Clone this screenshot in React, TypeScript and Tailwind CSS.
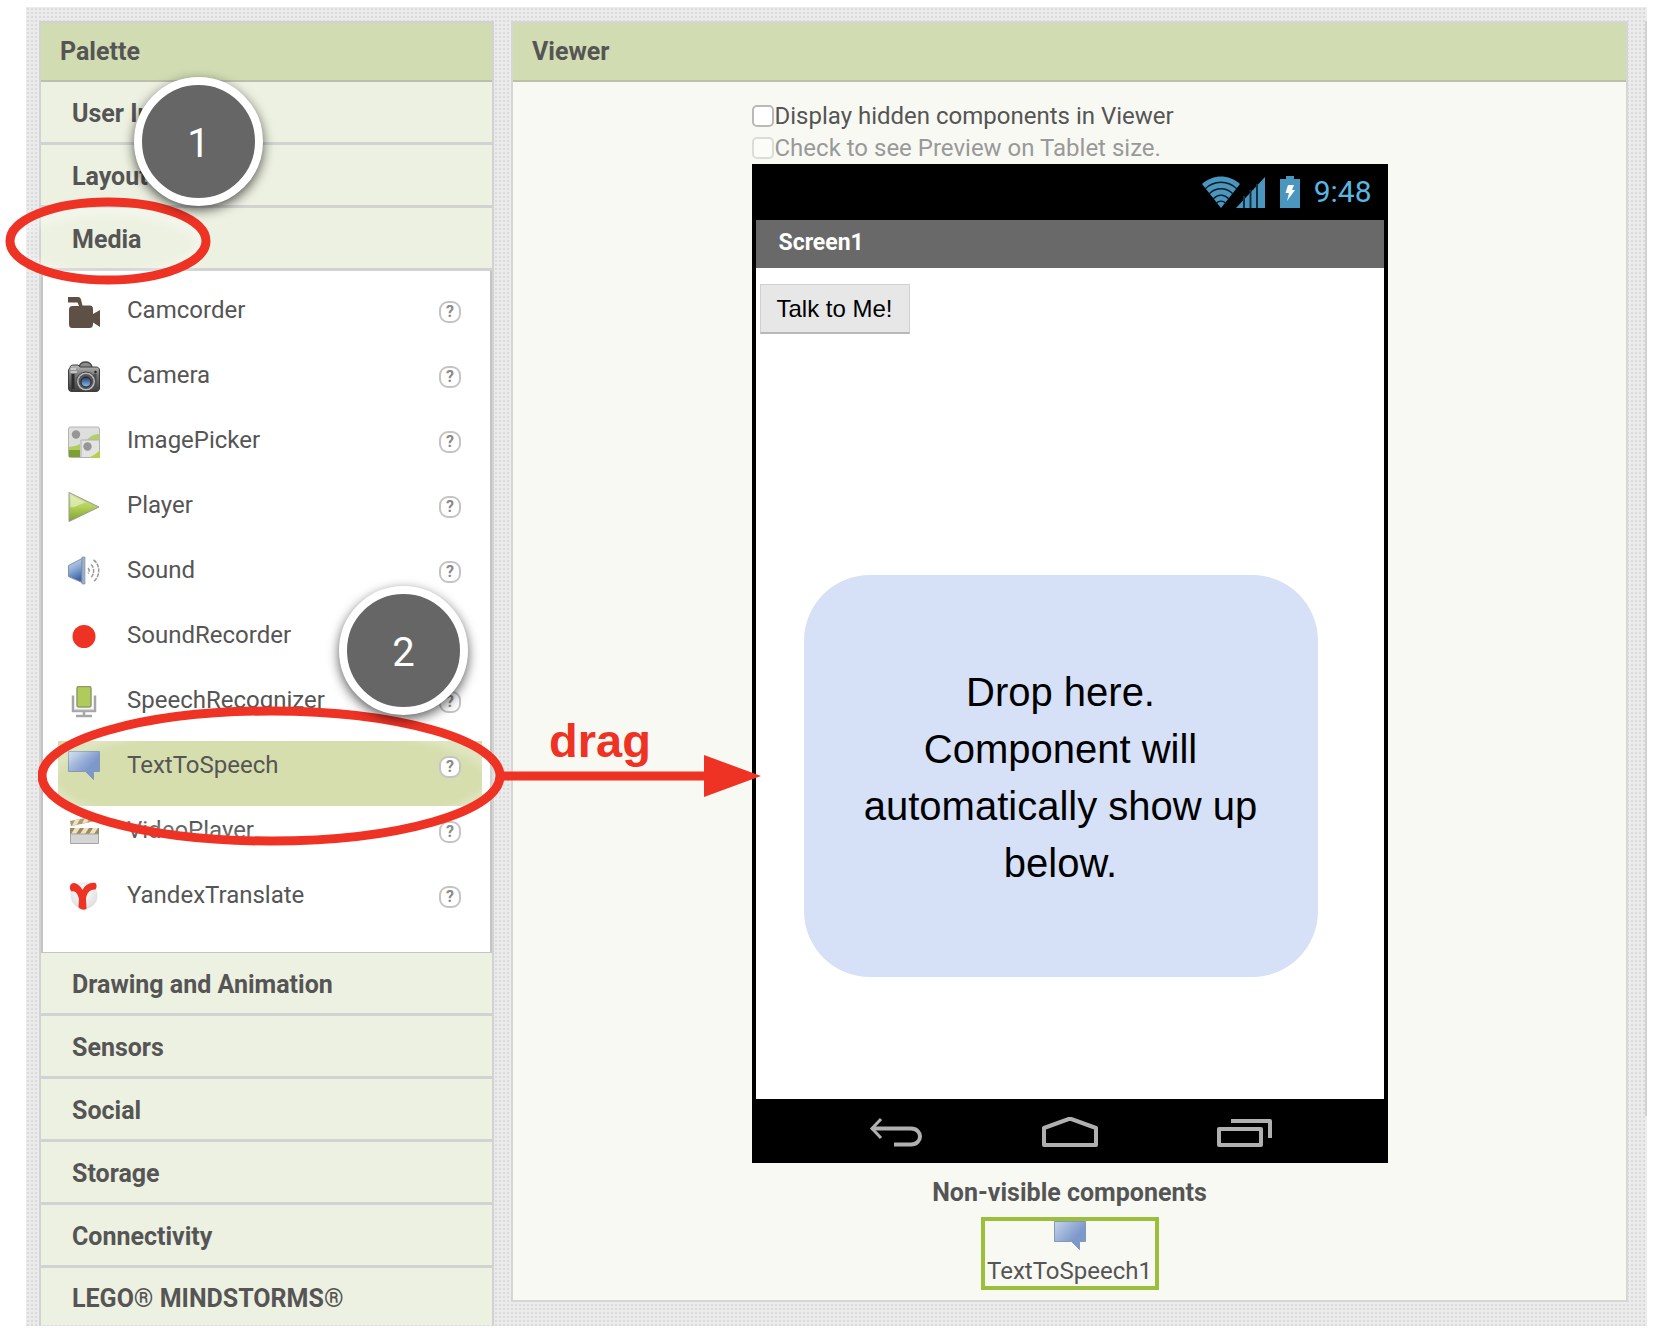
import type { ReactNode } from "react";

const camcorder = (
  <svg viewBox="0 0 32 32" className="size-8" fill="#5f5045" aria-hidden="true">
    <path d="M0 1H10C12 1 12.500 2 13 3.500L14.500 9.500H22C24 9.500 25 11 25 13V18L32 14V31L25 26.500V28C25 30.500 24 32 21.500 32H4C2 32 1 30.500 1 28V14C1 11.500 2 10 4.500 10H11L9.500 6.500H0Z" />
  </svg>
);

const camera = (
  <svg viewBox="0 0 32 32" className="size-8" aria-hidden="true">
    <defs>
      <linearGradient id="camBody" x1="0" y1="0" x2="0" y2="1">
        <stop offset="0" stopColor="#bdbdbd" />
        <stop offset="0.35" stopColor="#7c7c7c" />
        <stop offset="1" stopColor="#3c3c3c" />
      </linearGradient>
      <linearGradient id="camLens" x1="0" y1="0" x2="0" y2="1">
        <stop offset="0" stopColor="#1d3a66" />
        <stop offset="1" stopColor="#8fc4f5" />
      </linearGradient>
    </defs>
    <path d="M11 6C12 2 14 1 17.500 1S23 2 24 6" fill="#8b8b8b" stroke="#4a4a4a" strokeWidth="1.500" />
    <path d="M2 6.500C2 4.500 4 4 6 4H10L12 6H28C30 6 31.500 7 31.500 9V27C31.500 29.500 30 30.500 28 30.500H4C1.500 30.500 .5 29.500 .5 27V9Z" fill="url(#camBody)" stroke="#3d3d3d" />
    <path d="M2.500 11H9M2.500 8H8" stroke="#d8d8d8" strokeWidth="1.500" />
    <path d="M5 13V28" stroke="#2c2c2c" strokeWidth="3" />
    <path d="M27 13V28" stroke="#4c4c4c" strokeWidth="3" />
    <circle cx="18" cy="20.500" r="9.500" fill="#b8b8b8" stroke="#454545" />
    <circle cx="18" cy="20.500" r="7.500" fill="#555" />
    <circle cx="18" cy="21" r="5" fill="url(#camLens)" stroke="#223" />
    <circle cx="27.500" cy="11" r="1.200" fill="#222" />
  </svg>
);

const imagePicker = (
  <svg viewBox="0 0 32 32" className="size-8" aria-hidden="true">
    <rect x="0.500" y="1" width="31" height="30.500" rx="2" fill="#dedede" stroke="#b5b5b5" />
    <circle cx="8" cy="8.500" r="4.200" fill="#969696" />
    <path d="M19 14C22 10 27 8 31 8V14Z" fill="#b5cf66" />
    <path d="M1 21C5 20 9 20 12 18V25H1Z" fill="#b2cd58" />
    <path d="M1 24H12V31H1Z" fill="#7d9f35" />
    <path d="M13 31.500V14H31.500V31.500Z" fill="#e3e3e3" stroke="#b0b0b0" />
    <circle cx="19.500" cy="20.500" r="4.200" fill="#969696" />
    <path d="M20 32C25 30 29 27 32 24V32Z" fill="#b5cf4f" />
  </svg>
);

const player = (
  <svg viewBox="0 0 32 32" className="size-8" aria-hidden="true">
    <defs>
      <linearGradient id="playFill" x1="0" y1="0" x2="0" y2="1">
        <stop offset="0" stopColor="#dbe8a8" />
        <stop offset="0.500" stopColor="#b4d059" />
        <stop offset="1" stopColor="#7fa12e" />
      </linearGradient>
    </defs>
    <path d="M1 1.500L31 16L1 30.500Z" fill="url(#playFill)" stroke="#999" />
    <path d="M2.500 4L18 11.500C12 12 9 17 2.500 16Z" fill="#e6f0c2" opacity="0.700" />
  </svg>
);

const sound = (
  <svg viewBox="0 0 32 32" className="size-8" aria-hidden="true">
    <defs>
      <linearGradient id="soundFill" x1="0" y1="0" x2="0.300" y2="1">
        <stop offset="0" stopColor="#d4e0f1" />
        <stop offset="0.500" stopColor="#8fadd8" />
        <stop offset="1" stopColor="#3f66a6" />
      </linearGradient>
    </defs>
    <path d="M0.500 9.500L14 2.500V26.500L.5 20.500Z" fill="url(#soundFill)" stroke="#8292ab" />
    <path d="M14 1H17V28H14Z" fill="#9db0cc" stroke="#7b899f" strokeWidth="0.600" />
    <path d="M20 12C21.500 13.500 21.500 16 20 17.500M23 8.500C26.500 11.500 26.500 18.500 23 21.500M25.500 4C32.500 8.500 32.500 20.500 25.500 25.500" fill="none" stroke="#999" strokeWidth="1.500" strokeDasharray="4 1" />
  </svg>
);

const recorder = (
  <svg viewBox="0 0 32 32" className="size-8" aria-hidden="true">
    <circle cx="16" cy="15.500" r="11.500" fill="#ee3224" />
  </svg>
);

const recognizer = (
  <svg viewBox="0 0 32 32" className="size-8" aria-hidden="true">
    <rect x="9" y="0.500" width="14" height="20.500" rx="2" fill="#b0ca5b" stroke="#8f9c68" strokeWidth="1.500" />
    <path d="M5 9.500V25H27V9.500" fill="none" stroke="#a6a6a6" strokeWidth="2.500" />
    <path d="M16 25V30M8 30H24" stroke="#a6a6a6" strokeWidth="2.500" />
    <path d="M7 23.500H25" stroke="#d5d5d5" strokeWidth="1.500" />
  </svg>
);

const speech = (
  <svg viewBox="0 0 32 32" className="size-8 shrink-0" aria-hidden="true">
    <defs>
      <linearGradient id="speechFill" x1="0" y1="0" x2="1" y2="0.800">
        <stop offset="0" stopColor="#c6d4ea" />
        <stop offset="0.700" stopColor="#7d98cb" />
        <stop offset="1" stopColor="#7d98cb" />
      </linearGradient>
    </defs>
    <path d="M0.500 .5H31.500V20.500H25.500V28.500L17.500 20.500H.5Z" fill="url(#speechFill)" stroke="#8498b8" />
  </svg>
);

const video = (
  <svg viewBox="0 0 32 32" className="size-8" aria-hidden="true">
    <path d="M2 5L27 0L28 5L3 10Z" fill="#a89876" />
    <path d="M7 4L12 3L9 8.500L4 9.500ZM17 2L22 1L19 6.500L14 7.500Z" fill="#efe2b8" />
    <path d="M2 12H31V18H2Z" fill="#998a6c" />
    <path d="M7 12H12L8 18H3ZM16 12H21L17 18H12ZM25 12H30L26 18H21Z" fill="#efe2b8" />
    <path d="M2.500 18H30.500V27.500H2.500Z" fill="#d5d5d5" stroke="#a5a5a5" />
  </svg>
);

const yandex = (
  <svg viewBox="0 0 32 32" className="size-8" aria-hidden="true">
    <defs>
      <radialGradient id="ball" cx="0.450" cy="0.350" r="0.650">
        <stop offset="0" stopColor="#fff" />
        <stop offset="1" stopColor="#dedede" />
      </radialGradient>
    </defs>
    <circle cx="16" cy="14.500" r="13.500" fill="url(#ball)" />
    <path d="M2 5C3 2 6 1 9 3C12 5 13.500 7 14.500 9C17 4 22 1 27.500 2C29 4 29 6 27.500 8.500C22 8 18.500 12 18 18L18.500 28C16 29.500 12 28.500 10.500 26L11 18C9.500 12 7 9.500 3.500 10.500C2 9 1.500 7 2 5Z" fill="#ee3224" />
  </svg>
);

const media: { name: string; icon: ReactNode }[] = [
  { name: "Camcorder", icon: camcorder },
  { name: "Camera", icon: camera },
  { name: "ImagePicker", icon: imagePicker },
  { name: "Player", icon: player },
  { name: "Sound", icon: sound },
  { name: "SoundRecorder", icon: recorder },
  { name: "SpeechRecognizer", icon: recognizer },
  { name: "TextToSpeech", icon: speech },
  { name: "VideoPlayer", icon: video },
  { name: "YandexTranslate", icon: yandex },
];

function Category({ name }: { name: string }) {
  return (
    <button className="block h-[63px] w-full border-b-3 border-[#d2d2d2] bg-[#edf1e1] pt-1 pl-[31px] text-left text-[25px] font-bold">
      {name}
    </button>
  );
}

function Step({ n }: { n: number }) {
  return (
    <span className="flex size-[129px] items-center justify-center rounded-full border-8 border-white bg-[#666] pt-1 text-[40px] text-white shadow-[0_4px_12px_rgba(0,0,0,0.65)]">
      {n}
    </span>
  );
}

function HelpButton({ name }: { name: string }) {
  return (
    <button
      aria-label={"Help for " + name}
      className="mt-[15px] flex size-[22px] items-center justify-center rounded-[9px] border-2 border-[#c4c4c4] bg-white text-base leading-none font-bold text-[#8a8a8a]"
    >
      ?
    </button>
  );
}

function DragCallout() {
  return (
    <div className="pointer-events-none absolute -top-[35px] -left-5 z-10">
      <svg width="726" height="142" viewBox="0 0 726 142" aria-hidden="true">
        <defs>
          <filter id="glow" x="-10%" y="-20%" width="120%" height="140%">
            <feGaussianBlur stdDeviation="5" />
          </filter>
        </defs>
        <ellipse cx="233" cy="73" rx="223" ry="60" fill="none" stroke="#fff" strokeOpacity="0.300" strokeWidth="10" filter="url(#glow)" />
        <ellipse cx="233" cy="70" rx="229" ry="65" fill="none" stroke="#ee3224" strokeWidth="9" />
        <path d="M466 65.500H666V49L723 70L666 91V74.500H466Z" fill="#ee3224" />
      </svg>
      <span className="absolute top-2 left-[511px] font-[Liberation_Sans,sans-serif] text-[47px] leading-[54px] font-bold text-[#ee3224]">
        drag
      </span>
    </div>
  );
}

function Palette() {
  return (
    <section className="w-[455px] shrink-0 border-x-2 border-t-2 border-[#d2d2d2]">
      <h2 className="h-[59px] border-b-2 border-[#bcbfae] bg-[#d1dcb3] pl-[19px] text-[25px] leading-[58px] font-bold">Palette</h2>
      <div className="relative">
        <Category name="User Interface" />
        <Category name="Layout" />
        <Category name="Media" />
        <svg className="pointer-events-none absolute top-[115px] -left-[37px] z-10" width="208" height="90" viewBox="0 0 208 90" aria-hidden="true">
          <defs>
            <filter id="glowSmall" x="-20%" y="-30%" width="140%" height="160%">
              <feGaussianBlur stdDeviation="5" />
            </filter>
          </defs>
          <ellipse cx="104" cy="47" rx="94" ry="34" fill="none" stroke="#fff" strokeOpacity="0.400" strokeWidth="10" filter="url(#glowSmall)" />
          <ellipse cx="104" cy="44" rx="98" ry="39" fill="none" stroke="#ee3224" strokeWidth="9" />
        </svg>
        <div className="absolute -top-[5px] left-[93px] z-20">
          <Step n={1} />
        </div>
      </div>
      <ul className="relative border-x-2 border-b border-[#c4c4c4] bg-white pt-[15px] pr-2 pb-4 pl-[15px] text-2xl">
        {media.map(({ name, icon }) => {
          const selected = name === "TextToSpeech";
          return (
            <li key={name} className={selected ? "relative flex h-[65px] items-start bg-[#d6deae] pr-[21px] pl-2.5" : "flex h-[65px] items-start pr-[21px] pl-2.5"}>
              <button className="flex flex-1 gap-[27px] pt-2.5 text-left">
                {icon}
                <span className="leading-7">{name}</span>
              </button>
              <HelpButton name={name} />
              {selected && <DragCallout />}
            </li>
          );
        })}
        <li className="absolute top-[315px] left-[296px] z-20">
          <Step n={2} />
        </li>
      </ul>
      <Category name="Drawing and Animation" />
      <Category name="Sensors" />
      <Category name="Social" />
      <Category name="Storage" />
      <Category name="Connectivity" />
      <button className="block h-[57px] w-full bg-[#edf1e1] pt-1 pl-[31px] text-left text-[25px] font-bold">LEGO® MINDSTORMS®</button>
    </section>
  );
}

function StatusBar() {
  return (
    <div className="flex h-[56px] items-center justify-end pr-3">
      <svg width="64" height="32" viewBox="0 0 64 32" aria-hidden="true">
        <path d="M0 8C11-2 27-2 38 8L19 32Z" fill="#4a96bf" />
        <path d="M3 13C12 4 26 4 35 13M7 18C14 11 24 11 31 18M11 23C16 18 22 18 27 23M14 27.500C17 24.500 21 24.500 24 27.500" fill="none" stroke="#0b1b24" strokeWidth="1.500" />
        <path d="M34 32L63 1V32Z" fill="#4a96bf" />
        <path d="M42 20V32M48.500 14V32M55 8V32" stroke="#12303f" strokeWidth="2" />
      </svg>
      <svg className="ml-3.5" width="20" height="32" viewBox="0 0 20 32" aria-hidden="true">
        <path d="M6 0H14V3H20V32H0V3H6Z" fill="#4a96bf" />
        <path d="M8 9H14L12 14H15L7 25L9 17H5.500Z" fill="#fff" />
      </svg>
      <span className="ml-3.5 text-[30px] leading-8 text-[#5ab5e2]">9:48</span>
    </div>
  );
}

function Phone() {
  return (
    <div className="w-[636px] border-x-4 border-black bg-black">
      <StatusBar />
      <div className="h-12 bg-[#696969] pl-[23px] text-[23px] leading-[46px] font-bold text-white">Screen1</div>
      <div className="relative h-[831px] bg-white px-1 pt-4">
        <button className="h-[50px] border border-b-2 border-[#d0d0d0] border-b-[#b8b8b8] bg-[#e7e7e7] px-4 font-[Liberation_Sans,sans-serif] text-2xl text-black">
          Talk to Me!
        </button>
        <div className="absolute top-[307px] left-12 flex h-[402px] w-[514px] items-center justify-center rounded-[66px] bg-[#d6e0f7] pt-1 text-center font-[Liberation_Sans,sans-serif] text-[40px] leading-[57px] text-black">
          <p>
            Drop here.
            <br />
            Component will
            <br />
            automatically show up
            <br />
            below.
          </p>
        </div>
      </div>
      <div className="flex h-16 items-center justify-center gap-[118px] pt-1 pl-0.5">
        <svg width="54" height="32" viewBox="0 0 54 32" fill="none" stroke="#b0b0b0" strokeWidth="3" aria-label="Back">
          <path d="M12 2L3 11.500L12 21" />
          <path d="M3 11.500H42C48 11.500 51 16 51 19.500C51 23 48 27.500 42 27.500H25" strokeWidth="4" />
        </svg>
        <svg width="58" height="32" viewBox="0 0 58 32" fill="none" stroke="#b0b0b0" strokeWidth="4" strokeLinejoin="round" aria-label="Home">
          <path d="M3 28V11L29 1.500L55 11V28Z" />
        </svg>
        <svg width="56" height="32" viewBox="0 0 56 32" fill="none" stroke="#b0b0b0" strokeWidth="4" strokeLinejoin="round" aria-label="Recent apps">
          <path d="M2 12H44V28H2ZM14 4H53V21" />
        </svg>
      </div>
    </div>
  );
}

function Viewer() {
  return (
    <section className="mb-6 min-w-0 flex-1 self-start border-2 border-[#d6d6d6] bg-[#f8f9f3]">
      <h2 className="h-[59px] border-b-2 border-[#bcbfae] bg-[#d1dcb3] pl-[19px] text-[25px] leading-[58px] font-bold">Viewer</h2>
      <div className="flex flex-col items-center pb-2.5">
        <div className="w-[636px] pt-[17px] text-2xl">
          <label className="flex h-[33px] items-center gap-px">
            <input type="checkbox" className="size-[22px] appearance-none rounded-[5px] border-2 border-[#b9b9b9] bg-white" />
            Display hidden components in Viewer
          </label>
          <label className="flex h-8 items-center gap-px text-[#999]">
            <input type="checkbox" disabled className="size-[22px] appearance-none rounded-[5px] border-2 border-[#dcdcd8] bg-[#fbfcf8]" />
            Check to see Preview on Tablet size.
          </label>
        </div>
        <Phone />
        <h3 className="mt-4 text-[25px] leading-7 font-bold">Non-visible components</h3>
        <button className="mt-2.5 flex h-[73px] w-[178px] flex-col items-center border-4 border-[#9bbf3b] text-2xl">
          {speech}
          <span className="h-[33px] leading-9">TextToSpeech1</span>
        </button>
      </div>
    </section>
  );
}

export default function App() {
  return (
    <main className="min-h-screen bg-white pt-[7px] pr-[9px] pb-[9px] pl-[26px] font-[Roboto,sans-serif] text-[#555]">
      <div className="flex gap-[17px] bg-[#ebebeb] bg-[radial-gradient(#dadada_1px,transparent_1px)] bg-[length:4px_4px] pt-[14px] pl-[13px]">
        <Palette />
        <Viewer />
        <div className="mb-[210px] border-l-2 border-[#d2d2d2]" />
      </div>
    </main>
  );
}
